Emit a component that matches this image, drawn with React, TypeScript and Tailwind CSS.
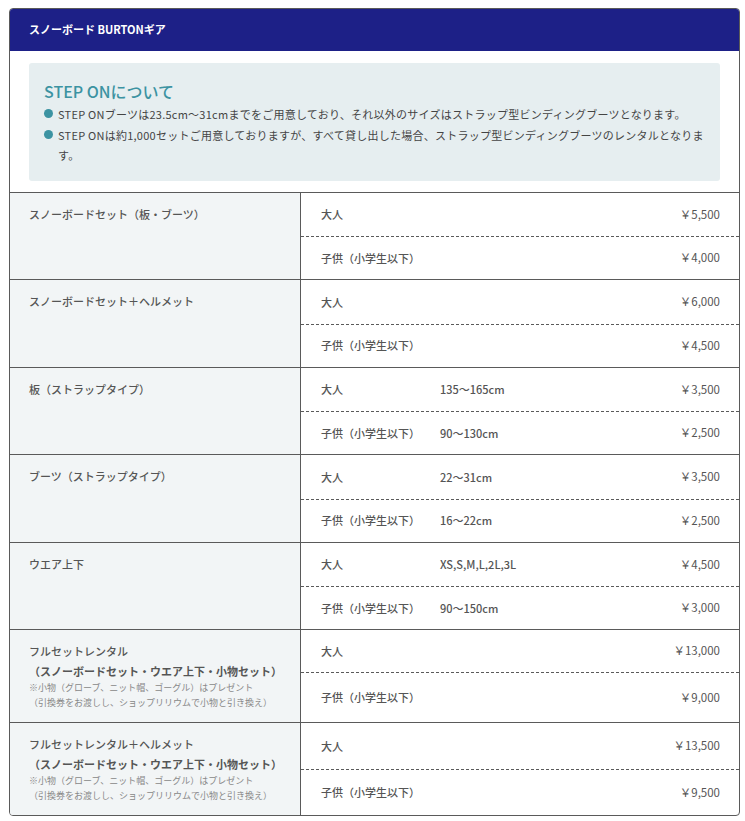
const rows = [
  {
    label: ['スノーボードセット（板・ブーツ）'],
    items: [
      { who: '大人', size: '', price: '￥5,500', h: 'h-[43.5px]' },
      { who: '子供（小学生以下）', size: '', price: '￥4,000', h: 'h-[43px]' },
    ],
  },
  {
    label: ['スノーボードセット＋ヘルメット'],
    items: [
      { who: '大人', size: '', price: '￥6,000', h: 'h-[43.5px]' },
      { who: '子供（小学生以下）', size: '', price: '￥4,500', h: 'h-[43px]' },
    ],
  },
  {
    label: ['板（ストラップタイプ）'],
    items: [
      { who: '大人', size: '135〜165cm', price: '￥3,500', h: 'h-[43.5px]' },
      { who: '子供（小学生以下）', size: '90〜130cm', price: '￥2,500', h: 'h-[43px]' },
    ],
  },
  {
    label: ['ブーツ（ストラップタイプ）'],
    items: [
      { who: '大人', size: '22〜31cm', price: '￥3,500', h: 'h-[43.5px]' },
      { who: '子供（小学生以下）', size: '16〜22cm', price: '￥2,500', h: 'h-[43px]' },
    ],
  },
  {
    label: ['ウエア上下'],
    items: [
      { who: '大人', size: 'XS,S,M,L,2L,3L', price: '￥4,500', h: 'h-[43.5px]' },
      { who: '子供（小学生以下）', size: '90〜150cm', price: '￥3,000', h: 'h-[43px]' },
    ],
  },
  {
    label: ['フルセットレンタル', '（スノーボードセット・ウエア上下・小物セット）'],
    note: true,
    items: [
      { who: '大人', size: '', price: '￥13,000', h: 'h-[42px]' },
      { who: '子供（小学生以下）', size: '', price: '￥9,000', h: 'h-[50px]' },
    ],
  },
  {
    label: ['フルセットレンタル＋ヘルメット', '（スノーボードセット・ウエア上下・小物セット）'],
    note: true,
    items: [
      { who: '大人', size: '', price: '￥13,500', h: 'h-[46px]' },
      { who: '子供（小学生以下）', size: '', price: '￥9,500', h: 'h-[46px]' },
    ],
  },
];

function Bullet({ children }: { children: React.ReactNode }) {
  return (
    <li className="flex items-start gap-[5px]">
      <span className="mt-[5px] w-[9px] h-[9px] shrink-0 rounded-full bg-[#3c93a2]" />
      <span>{children}</span>
    </li>
  );
}

export default function App() {
  return (
    <div
      className="bg-white w-[745px] min-h-[821px] pt-2 pl-[9px] text-[#555]"
      style={{ fontFamily: '"Noto Sans CJK JP", "Noto Sans", sans-serif' }}
    >
      <div className="w-[731px] border border-[#5a5a5a] rounded-[4px] overflow-hidden">
        {/* ヘッダー */}
        <div className="h-[42px] bg-[#1d2087] flex items-center px-[19px] pb-[1px]">
          <h2 className="text-[11px] font-bold text-white">スノーボード BURTONギア</h2>
        </div>

        {/* STEP ON */}
        <div className="px-[19px] pt-[12px] pb-[11px]">
          <div className="bg-[#e6eef0] rounded-[3px] pt-[16px] pb-[15px] pl-[15px] pr-[15px]">
            <h3 className="text-[16px] leading-[24px] font-medium text-[#3c93a2] mb-[1px]">
              STEP ONについて
            </h3>
            <ul className="text-[11px] leading-[20.5px] tracking-[0.25px] text-[#444]">
              <Bullet>
                STEP ONブーツは23.5cm〜31cmまでをご用意しており、それ以外のサイズはストラップ型ビンディングブーツとなります。
              </Bullet>
              <Bullet>
                STEP ONは約1,000セットご用意しておりますが、すべて貸し出した場合、ストラップ型ビンディングブーツのレンタルとなります。
              </Bullet>
            </ul>
          </div>
        </div>

        {/* 料金表 */}
        <div>
          {rows.map((row, i) => (
            <div key={i} className="flex border-t border-[#5a5a5a]">
              <div className="w-[291px] shrink-0 bg-[#f2f5f6] border-r border-[#5a5a5a] pl-[19px] pr-2 pt-[11px] pb-[12px]">
                {row.label.map((l, j) => (
                  <p
                    key={j}
                    className={
                      'text-[11px] leading-[20px] ' + (j === 0 ? 'font-medium' : 'font-bold')
                    }
                  >
                    {l}
                  </p>
                ))}
                {row.note && (
                  <div className="text-[9px] leading-[15px] text-[#888] mt-[-1px]">
                    <p>※小物（グローブ、ニット帽、ゴーグル）はプレゼント</p>
                    <p>（引換券をお渡しし、ショップリリウムで小物と引き換え）</p>
                  </div>
                )}
              </div>
              <div className="flex-1 flex flex-col">
                {row.items.map((it, j) => (
                  <div
                    key={j}
                    className={
                      'flex items-center pl-[20px] pr-[19px] text-[11px] ' +
                      it.h +
                      (j > 0 ? ' border-t border-dashed border-[#5a5a5a]' : '')
                    }
                  >
                    <span className="w-[119px] shrink-0 font-medium">{it.who}</span>
                    <span className="flex-1 font-medium">{it.size}</span>
                    <span className="text-[11.5px]">{it.price}</span>
                  </div>
                ))}
              </div>
            </div>
          ))}
        </div>
      </div>
    </div>
  );
}
